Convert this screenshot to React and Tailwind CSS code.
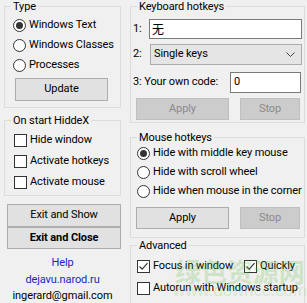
import React from "react";

const font = { fontFamily: 'Roboto, "Noto Sans", sans-serif', letterSpacing: "-0.1px" };

function Radio({ checked }) {
  return (
    <span className="relative flex items-center justify-center w-[13px] h-[13px] rounded-full border border-[#333333] bg-white shrink-0">
      {checked && <span className="w-[7px] h-[7px] rounded-full bg-[#333333]" />}
    </span>
  );
}

function Check({ checked }) {
  return (
    <span className="relative flex items-center justify-center w-[13px] h-[13px] border border-[#333333] bg-white shrink-0">
      {checked && (
        <svg width="11" height="11" viewBox="0 0 11 11">
          <path d="M1.5 5.5 L4.2 8.2 L9.5 2.2" fill="none" stroke="#333" strokeWidth="1.2" />
        </svg>
      )}
    </span>
  );
}

function Group({ title, className, children }) {
  return (
    <fieldset className={"border border-[#dcdcdc] min-w-0 shrink-0 " + className}>
      <legend className="ml-[6px] px-[2px] leading-[13px] whitespace-nowrap">{title}</legend>
      {children}
    </fieldset>
  );
}

function Btn({ className, children, disabled }) {
  return (
    <div
      className={
        "flex items-center justify-center border whitespace-nowrap shrink-0 " +
        (disabled
          ? "bg-[#cccccc] border-[#bfbfbf] text-[#8a8a8a] "
          : "bg-[#e1e1e1] border-[#adadad] ") +
        className
      }
    >
      {children}
    </div>
  );
}

function Row({ h, children, className = "" }) {
  return (
    <div className={"flex items-center gap-[3px] whitespace-nowrap " + h + " " + className}>{children}</div>
  );
}

export default function App() {
  return (
    <div
      className="relative w-[307px] h-[303px] bg-[#f0f0f0] flex text-[11px] text-black overflow-hidden"
      style={font}
    >
      {/* Left column */}
      <div className="ml-[4px] w-[117px] shrink-0 flex flex-col">
        <Group title="Type" className="h-[108px]">
          <div className="flex flex-col pl-[8px] pt-[2px]">
            <Row h="h-[20px]">
              <Radio checked />
              <span>Windows Text</span>
            </Row>
            <Row h="h-[20px]">
              <Radio />
              <span>Windows Classes</span>
            </Row>
            <Row h="h-[20px]">
              <Radio />
              <span>Processes</span>
            </Row>
          </div>
          <Btn className="ml-[10px] mt-[3px] w-[93px] h-[23px]">Update</Btn>
        </Group>

        <Group title="On start HiddeX" className="mt-[6px] h-[82px]">
          <div className="flex flex-col pl-[9px] pt-[3px]">
            <Row h="h-[21px]">
              <Check />
              <span>Hide window</span>
            </Row>
            <Row h="h-[21px]">
              <Check />
              <span>Activate hotkeys</span>
            </Row>
            <Row h="h-[21px]">
              <Check />
              <span>Activate mouse</span>
            </Row>
          </div>
        </Group>

        <Btn className="mt-[8px] ml-[3px] w-[114px] h-[23px]">Exit and Show</Btn>
        <Btn className="ml-[3px] w-[114px] h-[22px] font-bold">Exit and Close</Btn>

        <div className="mt-[6px] flex flex-col items-center whitespace-nowrap shrink-0">
          <span className="h-[16px] leading-[16px] text-[#1e1ec8]">Help</span>
          <span className="h-[17px] leading-[17px] text-[#1e1ec8]">dejavu.narod.ru</span>
          <span className="h-[16px] leading-[16px]">ingerard@gmail.com</span>
        </div>
      </div>

      {/* Right column */}
      <div className="ml-[9px] w-[175px] shrink-0 flex flex-col">
        <Group title="Keyboard hotkeys" className="h-[123px]">
          <div className="flex items-center mt-[6px] pl-[2px] whitespace-nowrap">
            <span className="w-[16px]">1:</span>
            <div
              className="w-[153px] h-[20px] bg-white border border-[#7a7a7a] flex items-center pl-[2px] text-[12px]"
              style={{ fontFamily: '"Noto Sans CJK SC", sans-serif' }}
            >
              无
            </div>
          </div>
          <div className="flex items-center mt-[5px] pl-[2px] whitespace-nowrap">
            <span className="w-[17px]">2:</span>
            <div className="w-[152px] h-[21px] bg-[#e5e5e5] border border-[#acacac] flex items-center justify-between pl-[3px] pr-[6px]">
              <span>Single keys</span>
              <svg width="9" height="6" viewBox="0 0 9 6">
                <path d="M0.5 0.5 L4.5 4.5 L8.5 0.5" fill="none" stroke="#444" strokeWidth="1" />
              </svg>
            </div>
          </div>
          <div className="flex items-center mt-[7px] pl-[2px] whitespace-nowrap">
            <span className="w-[97px]">3: Your own code:</span>
            <div className="w-[71px] h-[21px] bg-white border border-[#7a7a7a] flex items-center pl-[3px]">0</div>
          </div>
          <div className="flex items-center mt-[5px] pl-[5px]">
            <Btn disabled className="w-[93px] h-[22px]">Apply</Btn>
            <Btn disabled className="ml-[11px] w-[60px] h-[22px]">Stop</Btn>
          </div>
        </Group>

        <Group title="Mouse hotkeys" className="mt-[8px] h-[107px]">
          <div className="flex flex-col pl-[6px]">
            <Row h="h-[19px]">
              <Radio checked />
              <span>Hide with middle key mouse</span>
            </Row>
            <Row h="h-[19px]">
              <Radio />
              <span>Hide with scroll wheel</span>
            </Row>
            <Row h="h-[19px]">
              <Radio />
              <span>Hide when mouse in the corner</span>
            </Row>
          </div>
          <div className="flex items-center mt-[6px] pl-[5px]">
            <Btn className="w-[93px] h-[22px]">Apply</Btn>
            <Btn disabled className="ml-[11px] w-[60px] h-[22px]">Stop</Btn>
          </div>
        </Group>

        <Group title="Advanced" className="mt-[1px] h-[66px]">
          <div className="flex flex-col pl-[6px] pt-[4px]">
            <div className="h-[21px] flex items-center whitespace-nowrap">
              <div className="flex items-center gap-[3px] w-[107px]">
                <Check checked />
                <span>Focus in window</span>
              </div>
              <div className="flex items-center gap-[3px]">
                <Check checked />
                <span>Quickly</span>
              </div>
            </div>
            <Row h="h-[22px]">
              <Check />
              <span>Autorun with Windows startup</span>
            </Row>
          </div>
        </Group>
      </div>

      {/* watermark overlay */}
      <div className="absolute left-[173px] top-[256px] flex flex-col items-center pointer-events-none opacity-25">
        <span
          className="text-[26px] leading-[30px] font-bold text-[#6cc04a] whitespace-nowrap"
          style={{ fontFamily: '"Noto Sans CJK SC", sans-serif' }}
        >
          绿色资源网
        </span>
        <span
          className="text-[17px] leading-[18px] text-[#8ccf6e] -mt-[4px] whitespace-nowrap"
          style={{ fontFamily: '"Liberation Sans", sans-serif' }}
        >
          www.downcc.com
        </span>
      </div>
    </div>
  );
}
